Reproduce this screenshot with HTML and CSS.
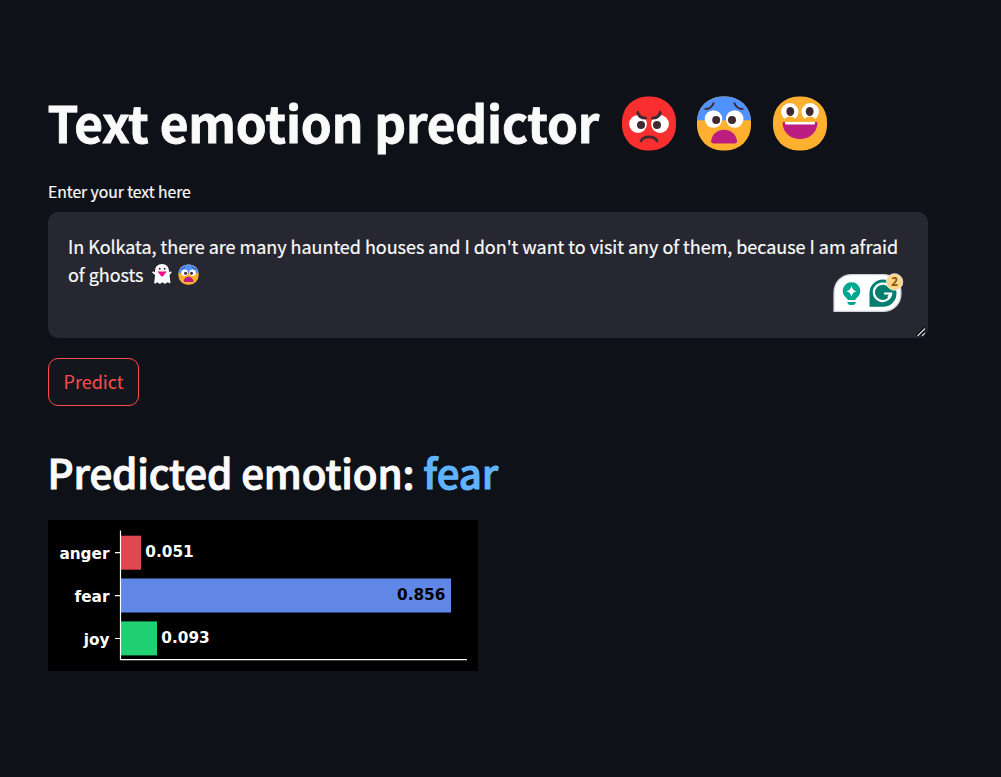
FILE: index.html
```
<!DOCTYPE html>
<html lang="en">
<head>
<meta charset="utf-8">
<title>Text emotion predictor</title>
<link rel="stylesheet" href="styles.css">
</head>
<body>
<svg class="defs" aria-hidden="true">
  <symbol id="fearful" viewBox="0 0 56 56">
    <clipPath id="face"><rect x="1" y="1" width="54" height="54" rx="25"/></clipPath>
    <g clip-path="url(#face)"><path fill="#ffb02e" d="M0 0h56v56H0z"/><path fill="#5092ff" d="M0 0h56v24.700H0z"/></g>
    <circle cx="17.500" cy="23.500" r="8.800" fill="#fff"/><circle cx="38.700" cy="23.500" r="8.800" fill="#fff"/>
    <circle cx="20.200" cy="24.500" r="4" fill="#402a32"/><circle cx="36" cy="24.500" r="4" fill="#402a32"/>
    <path d="M9.500 13.500c4-.3 6.800-2.200 8-5.800M46.500 13.500c-4-.3-6.800-2.200-8-5.800" fill="none" stroke="#402a32" stroke-width="2" stroke-linecap="round"/>
    <path fill="#bb1d80" d="M17.500 48c-1.700 0-2.600-1-2.300-3 1-6.300 6.200-10.800 12.800-10.800S39.900 38.700 41 45c.3 2-.6 3-2.300 3z"/>
  </symbol>
</svg>
<main class="page">
  <h1 class="title"><span class="title-text">Text emotion predictor</span>
    <span class="faces">
      <svg viewBox="0 -0.5 56 56"><rect x="1" y="1" width="54" height="54" rx="25" fill="#f92f2f"/><circle cx="17" cy="28.500" r="8.900" fill="#fff"/><circle cx="39" cy="28.500" r="8.900" fill="#fff"/><path fill="#f92f2f" d="M12 17l15 7v-8H12zM44 17l-15 7v-8h15z"/><circle cx="20" cy="29.500" r="4" fill="#402a32"/><circle cx="36" cy="29.500" r="4" fill="#402a32"/><path d="M16.700 17c1 3.600 3.900 5.600 7.800 5.600M39.300 17c-1 3.600-3.900 5.600-7.800 5.600M20 45.300c2.700-5.300 13.300-5.300 16 0" fill="none" stroke="#402a32" stroke-width="2.900" stroke-linecap="round"/></svg>
      <svg viewBox="0 -0.5 56 56"><use href="#fearful" width="56" height="56"/></svg>
      <svg viewBox="0 -0.5 56 56"><rect x="1" y="1" width="54" height="54" rx="25" fill="#ffb02e"/><circle cx="17.800" cy="16.300" r="8.700" fill="#fff"/><circle cx="38.200" cy="16.300" r="8.700" fill="#fff"/><path fill="#ffb02e" d="M12 24c3-4 9-4 12 0l-2 3h-8zM32 24c3-4 9-4 12 0l-2 3h-8z"/><ellipse cx="18.300" cy="16" rx="3.900" ry="4.600" fill="#402a32"/><ellipse cx="37.700" cy="16" rx="3.900" ry="4.600" fill="#402a32"/><path fill="#bb1d80" d="M11.500 26.500h33c1 0 1 1 .9 1.900C44.500 37.700 37 43.500 28 43.500S11.500 37.700 10.600 28.400c0-.9 0-1.900.9-1.900z"/><path fill="#fff" d="M13 26.500h30v1.200c0 .8-.6 1.400-1.400 1.400H14.400c-.8 0-1.400-.6-1.400-1.400z"/></svg>
    </span>
  </h1>
  <label class="label">Enter your text here</label>
  <div class="textbox">
    <div class="line line-one">In Kolkata, there are many haunted houses and I don't want to visit any of them, because I am afraid</div>
    <div class="line"><span class="line-two">of ghosts</span>
      <svg class="ghost" viewBox="0 0 22 22"><path fill="#fff" d="M4 8.300C4 4 6.800 1 11 1s7 3 7 7.300v1l1.500-.8c1-.4 1.600.9.8 1.500L18.500 12l.9 7.200c.1.900-.5 1.300-1.300.9l-1.700-.8-1.700 1.200c-.5.300-1 .3-1.500 0L11.500 19.300l-2 1.200c-.5.300-1 .3-1.500 0l-1.600-1.200-2 1.100c-.8.400-1.400 0-1.200-.9L4.100 12 1.600 10c-.8-.6-.2-1.900.8-1.500L4 9.300z"/><circle cx="8.700" cy="5.800" r="1" fill="#402a32"/><circle cx="13.600" cy="5.800" r="1" fill="#402a32"/><path fill="#f70a8d" d="M7 8.200q4 .8 8.200 0c0 1.700-.8 2.500-2 2.900 0 3.300-4 3.300-4.200 0-1.200-.4-2-1.400-2-2.900z"/></svg>
      <svg class="small-fear" viewBox="0 0 56 56"><use href="#fearful" width="56" height="56"/></svg>
    </div>
    <svg class="assistant" viewBox="0.5 0 72 40">
      <path d="M1.500 38.300V20C1.500 9 9 1.700 19.500 1.700h31C61 1.700 68.500 9 68.500 20s-7.500 18.300-18 18.300z" fill="#fff" stroke="#cfd0dc" stroke-width="1.300"/>
      <path fill="#00a78e" d="M19 9.200a8.700 8.700 0 0 0-5.700 15.300c1 .8 1.700 1.600 2.100 2.500h7.200c.4-.9 1.100-1.700 2.100-2.500A8.700 8.700 0 0 0 19 9.200zM14.800 29h8.600c-.3 1.900-1.400 2.900-3 2.900h-2.600c-1.600 0-2.700-1-3-2.900z"/>
      <path fill="#fff" d="M19 12.700c1 3.700 1.800 4.500 5.500 5.500-3.700 1-4.500 1.800-5.500 5.500-1-3.700-1.800-4.500-5.500-5.500 3.700-1 4.500-1.800 5.500-5.500z"/>
      <path fill="#027e6f" d="M37 33.700V20A13.500 13.500 0 0 1 64 20c0 8-5.500 13.700-13.500 13.700z"/>
      <path d="M57.200 14.300a8.700 8.700 0 1 0 1.500 6.200H51.500M58.700 20.500l-3 3.700" fill="none" stroke="#fff" stroke-width="2.200"/>
      <circle cx="62" cy="9" r="8.300" fill="#ffd58c" stroke="#ececf2" stroke-width=".8"/>
      <text x="62" y="13.200" class="count">2</text>
    </svg>
    <svg class="grip" viewBox="0 0 10 10"><path d="M1 9L9 1M5.500 9L9 5.500" stroke="#000" stroke-width="3"/><path d="M1.500 9L9 1.500M6 9L9 6" stroke="#ddd" stroke-width="1.300"/></svg>
  </div>
  <button class="predict">Predict</button>
  <h2 class="result"><span class="result-label">Predicted emotion:</span> <span class="emotion">fear</span></h2>
  <svg class="chart" viewBox="0 0 430 151">
    <rect width="430" height="151"/>
    <rect class="anger" x="72.500" y="15.700" width="20.500" height="34"/>
    <rect class="fear" x="72.500" y="58.500" width="330.500" height="34"/>
    <rect class="joy" x="72.500" y="101.400" width="36.500" height="34"/>
    <path class="axis" d="M72.500 10.500v129.500M67 32.700h5.500M67 75.700h5.500M67 118.500h5.500M72 139.700h347"/>
    <g class="names"><text x="61.500" y="39">anger</text><text x="61.500" y="82">fear</text><text x="61.500" y="124.500">joy</text></g>
    <text x="97.300" y="37">0.051</text><text class="inside" x="349" y="80">0.856</text><text x="113.300" y="122.700">0.093</text>
  </svg>
</main>
</body>
</html>
```

FILE: styles.css
```
body {
  margin: 0;
  min-height: 777px;
  background: #0e1117;
  color: #fafafa;
  font-family: "Noto Sans CJK SC", "Noto Sans", sans-serif;
}
.defs { position: absolute; width: 0; height: 0; }
.page {
  display: flex;
  flex-direction: column;
  align-items: flex-start;
  width: 880px;
  padding: 89px 48px 0;
}
.title {
  display: flex;
  align-items: center;
  gap: 21.5px;
  height: 66px;
  margin: 0;
  font-size: 49.5px;
  line-height: 66px;
  font-weight: 700;
  letter-spacing: -0.18px;
  -webkit-text-stroke: 0.8px #fafafa;
  white-space: nowrap;
}
.title-text { margin-left: -0.5px; }
.faces { display: flex; gap: 19.500px; margin-top: 2px; }
.faces svg { width: 56px; height: 56px; }
.label {
  margin-top: 24px;
  height: 26px;
  font-size: 15.75px;
  line-height: 26px;
  letter-spacing: -0.06px;
  -webkit-text-stroke: 0.2px #fafafa;
}
.textbox {
  position: relative;
  box-sizing: border-box;
  width: 880px;
  height: 126px;
  margin-top: 7px;
  padding: 20px 20px;
  border-radius: 10px;
  background: #262730;
  font-size: 18px;
  letter-spacing: -0.035px;
  -webkit-text-stroke: 0.2px #fafafa;
}
.line { display: flex; align-items: center; height: 28px; line-height: 28px; white-space: nowrap; }
.ghost { width: 22px; height: 22px; margin-left: 7px; }
.small-fear { width: 21px; height: 21px; margin-left: 5px; }
.assistant { position: absolute; left: 785px; top: 61px; width: 72px; height: 40px; -webkit-text-stroke: 0; }
.count { font: 700 11.500px "Open Sans", sans-serif; fill: #8a5208; text-anchor: middle; }
.grip { position: absolute; right: 2px; bottom: 1px; width: 10px; height: 10px; }
.predict {
  box-sizing: border-box;
  width: 91px;
  height: 48px;
  margin-top: 20px;
  padding: 0 0 2px;
  border: 1px solid #ff4b4b;
  border-radius: 10px;
  background: #13171d;
  color: #ff4b4b;
  font: 18px/44px "Noto Sans CJK SC", sans-serif;
}
.result {
  height: 54px;
  margin: 39px 0 21px -0.5px;
  font-size: 40.300px;
  line-height: 54px;
  font-weight: 500;
  letter-spacing: -0.12px;
  -webkit-text-stroke: 1px currentColor;
  white-space: nowrap;
}
.emotion { color: #60b4ff; -webkit-text-stroke-color: #60b4ff; }
.chart { display: block; width: 430px; height: 151px; }
.chart text { fill: #fff; font: 700 15.300px "DejaVu Sans", sans-serif; }
.chart .names text { text-anchor: end; }
.chart .inside { fill: #000; }
.anger { fill: #df4751; }
.fear { fill: #6087e7; }
.joy { fill: #20d073; }
.axis { stroke: #fff; stroke-width: 1.200; fill: none; }
```
